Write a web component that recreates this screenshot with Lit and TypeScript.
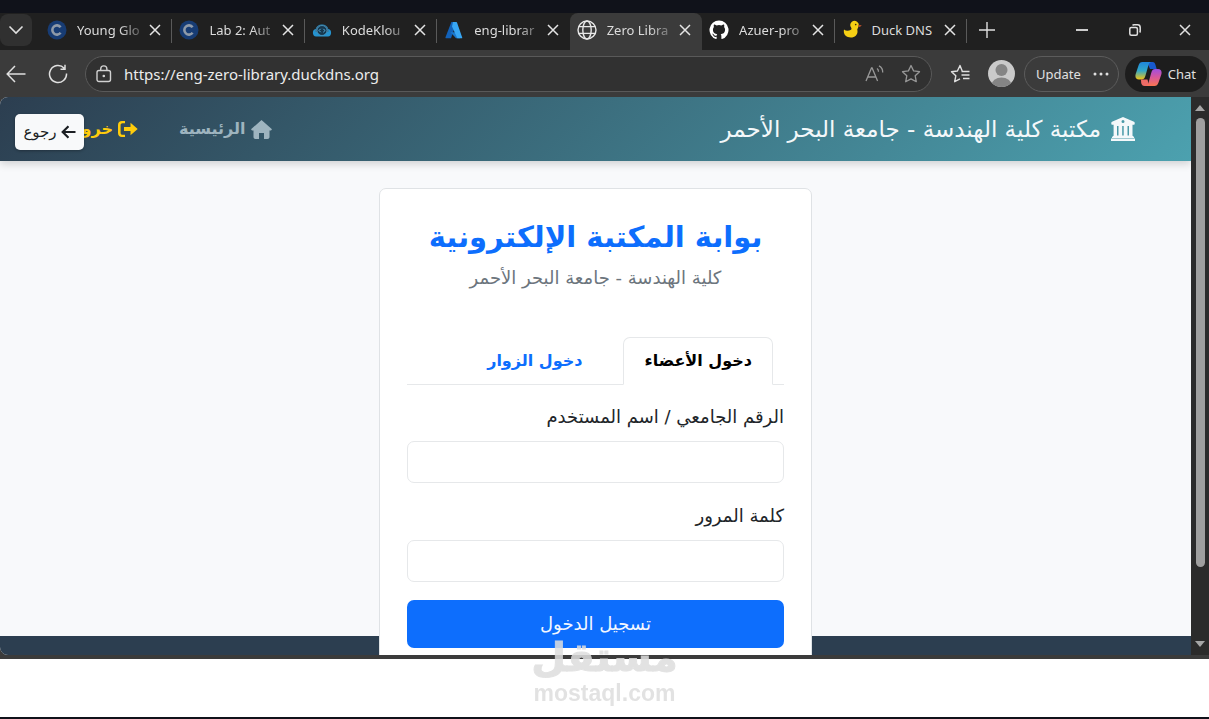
import { LitElement, html, css, svg } from "lit";
import { customElement, property, state } from "lit/decorators.js";
import { classMap } from "lit/directives/class-map.js";

const closeIcon = html`<svg viewBox="0 0 12 12" width="12" height="12" fill="none" stroke="currentColor" stroke-width="1.5" aria-hidden="true"><path d="M1 1l10 10M11 1L1 11" /></svg>`;

const courseIcon = svg`<circle cx="10" cy="10" r="9.5" fill="#173c74" /><path d="M13.6 7.2A4.6 4.6 0 1 0 13.6 12.8" fill="none" stroke="#8f9aa8" stroke-width="2.6" />`;
const cloudIcon = svg`<path d="M4 16.5a3.8 3.8 0 0 1-.3-7.4 6.6 6.6 0 0 1 12.6 0A3.8 3.8 0 0 1 16 16.5z" fill="#2593cf" /><path d="M3.6 10a6.6 6.6 0 0 1 12.8 0v2H3.6z" fill="#3c6c8a" /><circle cx="10" cy="10.5" r="5" fill="#16384f" stroke="#4d9cc6" stroke-width=".8" /><path d="M8.700 8.800L7 10.500l1.700 1.700M11.300 8.800l1.700 1.700-1.700 1.700" fill="none" stroke="#58b2e2" />`;
const azureIcon = svg`<path d="M7.400 2h5.200L7 18.300H2.300c-.7 0-1-.5-.8-1.100z" fill="#1261b8" /><path d="M6.500 12.200h7.700l2 6-4.200.1z" fill="#1a78cf" /><path d="M9 2h3.200c.4 0 .7.200.8.600l5.200 14.800c.2.500-.1.900-.6.900h-4.300L8 6.500z" fill="#37a6f4" />`;
const globeIcon = svg`<g fill="none" stroke="#e8e8e8" stroke-width="1.4"><circle cx="10" cy="10" r="9" /><ellipse cx="10" cy="10" rx="4.2" ry="9" /><path d="M1.800 6.600h16.400M1.800 13.400h16.400" /></g>`;
const githubIcon = svg`<path d="M10 .5a9.500 9.500 0 0 0-3 18.520c.48.09.65-.2.65-.46v-1.800c-2.640.57-3.200-1.120-3.200-1.120-.43-1.100-1.050-1.390-1.050-1.390-.87-.59.060-.58.060-.58.950.07 1.450.98 1.450.98.850 1.450 2.220 1.030 2.760.79.090-.61.330-1.030.600-1.270-2.110-.24-4.330-1.050-4.330-4.690 0-1.040.37-1.890.98-2.550-.1-.24-.42-1.210.09-2.510 0 0 .8-.26 2.610.97a9.100 9.100 0 0 1 4.760 0c1.810-1.230 2.610-.97 2.610-.97.510 1.300.190 2.270.090 2.510.610.660.980 1.510.980 2.550 0 3.650-2.230 4.450-4.350 4.690.350.290.650.880.650 1.770v2.620c0 .260.170.560.660.460A9.500 9.500 0 0 0 10 .5z" fill="#fff" />`;
const duckIcon = svg`<path d="M2 9.500c2 1.500 4.500 1.600 7 .2.800-.5.500-1.400.1-2.200A4.200 4.200 0 1 1 16.300 7c-.3 1.400-1.300 2-.9 3.200.7 3.800-1.700 7.300-6.600 7.300C4 17.500 1 14.500 2 9.500z" fill="#f5cf14" /><path d="M16.400 4.500c1.200.4 2.200.7 3.200.5-.5 1.600-1.800 2.200-3.200 2z" fill="#a5492a" /><circle cx="13.700" cy="4.600" r=".8" fill="#3b2b0a" />`;

const tabs = [
  { title: "Young Glo", icon: courseIcon, fade: true, line: true },
  { title: "Lab 2: Aut", icon: courseIcon, fade: true, line: true },
  { title: "KodeKlou", icon: cloudIcon, fade: true, line: true },
  { title: "eng-librar", icon: azureIcon, fade: true },
  { title: "Zero Libra", icon: globeIcon, fade: true, active: true },
  { title: "Azuer-pro", icon: githubIcon, fade: true, line: true },
  { title: "Duck DNS", icon: duckIcon, line: true },
];

@customElement("browser-tab")
class BrowserTab extends LitElement {
  static styles = css`
    :host { display: block; flex: 1; min-width: 0; }
    .tab {
      display: flex; align-items: center; box-sizing: border-box;
      height: 37px; padding: 0 11px 3px 7px; position: relative; color: #dcdcdc;
    }
    .tab.active { background: #3b3b3b; border-radius: 8px 8px 0 0; }
    .tab.line::after {
      content: ""; position: absolute; right: 0; top: 6px; width: 1px; height: 24px; background: #5a5a5a;
    }
    .icon { flex: none; margin-right: 10px; }
    .title { flex: 1; min-width: 0; overflow: hidden; white-space: nowrap; font: 13px/20px "Noto Sans", sans-serif; }
    .fade { mask-image: linear-gradient(90deg, #000 64%, rgba(0, 0, 0, 0.2) 100%); }
    .close {
      flex: none; display: grid; place-items: center; width: 12px; height: 12px; margin-left: 6px;
      border: 0; padding: 0; background: none; color: #e4e4e4;
    }
  `;
  @property({ attribute: false }) data: any;
  render() {
    const t = this.data;
    return html`<div class=${classMap({ tab: true, active: !!t.active, line: !!t.line })}>
      <svg class="icon" viewBox="0 0 20 20" width="20" height="20" aria-hidden="true">${t.icon}</svg>
      <span class=${classMap({ title: true, fade: !!t.fade })}>${t.title}</span>
      <button class="close" aria-label="Close tab">${closeIcon}</button>
    </div>`;
  }
}

@customElement("browser-chrome")
class BrowserChrome extends LitElement {
  static styles = css`
    :host { display: block; font-family: "Noto Sans", sans-serif; }
    button { border: 0; padding: 0; background: none; color: #e0e0e0; font: inherit; display: grid; place-items: center; flex: none; }
    .strip { height: 13px; background: #10121a; }
    .tabbar { display: flex; align-items: center; height: 37px; background: #202020; }
    .menu { width: 32px; height: 32px; margin: 0 8px 3px 0; border-radius: 8px; background: #303030; }
    .tabs { display: flex; flex: 0 1 927px; min-width: 0; }
    .add { width: 40px; height: 30px; margin-bottom: 4px; }
    .window { display: flex; margin: 0 0 3px auto; }
    .window button { width: 53px; height: 32px; }
    .window button:last-child { width: 48px; }
    .toolbar { display: flex; align-items: center; height: 47px; background: #3b3b3b; box-sizing: border-box; padding: 0 2px 0 5px; }
    .tool { width: 22px; height: 22px; }
    .reload { margin: 0 16px 0 20px; }
    .address {
      flex: 1; min-width: 0; display: flex; align-items: center; height: 36px; box-sizing: border-box;
      border: 1px solid #595959; border-radius: 18px; background: #313131; padding: 0 10px;
    }
    .address .lock { margin-right: 12px; width: 16px; }
    .url { flex: 1; min-width: 0; border: 0; padding: 0; background: none; color: #ececec; outline: 0; font: 15px/20px "Noto Sans", sans-serif; }
    .dim { color: #989898; width: 20px; }
    .read { margin-right: 16px; }
    .fav { margin: 0 17px; }
    .update { display: flex; align-items: center; gap: 11px; height: 36px; box-sizing: border-box; padding: 0 8px 0 11px; border: 1px solid #5c5c5c; border-radius: 18px; font-size: 13px; line-height: 20px; margin: 0 6px 0 9px; }
    .chat { display: flex; align-items: center; gap: 6px; height: 36px; padding: 0 11px 0 10px; border-radius: 18px; background: #1d1d1d; font-size: 13px; line-height: 20px; }
  `;
  render() {
    return html`
      <div class="strip"></div>
      <div class="tabbar">
        <button class="menu" aria-label="Tab actions"><svg width="16" height="10" viewBox="0 0 16 10" fill="none" stroke="currentColor" stroke-width="1.6"><path d="M1.500 1.500L8 8l6.500-6.500" /></svg></button>
        <div class="tabs">${tabs.map((t) => html`<browser-tab .data=${t}></browser-tab>`)}</div>
        <button class="add" aria-label="New tab"><svg width="16" height="16" viewBox="0 0 16 16" stroke="currentColor" stroke-width="1.4"><path d="M8 0v16M0 8h16" /></svg></button>
        <div class="window">
          <button aria-label="Minimize"><svg width="12" height="12" stroke="currentColor" stroke-width="1.8"><path d="M0 6h12" /></svg></button>
          <button aria-label="Restore"><svg width="12" height="12" viewBox="0 0 12 12" fill="none" stroke="currentColor" stroke-width="1.5"><rect x=".8" y="3.6" width="7.6" height="7.6" rx="1.5" /><path d="M3.500 1.300C4 .9 4.500.8 5 .8h3.500a2.700 2.700 0 0 1 2.700 2.700V7c0 .6-.2 1-.5 1.500" /></svg></button>
          <button aria-label="Close window">${closeIcon}</button>
        </div>
      </div>
      <div class="toolbar">
        <button class="tool" aria-label="Back"><svg width="20" height="18" viewBox="0 0 20 18" fill="none" stroke="currentColor" stroke-width="1.5"><path d="M19.500 9H1.500M9 1L1.200 9 9 17" /></svg></button>
        <button class="tool reload" aria-label="Reload"><svg width="20" height="20" viewBox="0 0 20 20" fill="none" stroke="currentColor" stroke-width="1.5"><path d="M18.500 9.500a8.500 8.500 0 1 1-2.300-5.300M17 .8v4.400h-4.500" /></svg></button>
        <div class="address">
          <button class="lock" aria-label="Site information"><svg width="16" height="18" viewBox="0 0 16 18" fill="none" stroke="#d0d0d0" stroke-width="1.4"><rect x="1" y="5.5" width="13.5" height="11" rx="2" /><path d="M4.700 5.500V4a3.100 3.100 0 0 1 6.200 0v1.500" /><circle cx="7.8" cy="11" r=".6" fill="#d0d0d0" /></svg></button>
          <input class="url" type="text" aria-label="Address" value="https://eng-zero-library.duckdns.org" />
          <button class="dim read" aria-label="Read aloud"><svg width="20" height="18" viewBox="0 0 20 18" fill="none" stroke="currentColor" stroke-width="1.3"><path d="M1 16L6.500 3h.6l5.500 13M3 12h7.600M12 3.500c1 .7 1.500 1.800 1.500 3.200M14 .8c2.500 1.300 3.900 3.700 3.700 6.700" /></svg></button>
          <button class="dim" aria-label="Add to favorites"><svg width="20" height="20" viewBox="0 0 20 20" fill="none" stroke="currentColor" stroke-width="1.3" stroke-linejoin="round"><path d="M10 1.500l2.600 5.400 5.900.8-4.300 4.100 1.100 5.900L10 14.900l-5.300 2.800 1.100-5.900L1.500 7.700l5.900-.8z" /></svg></button>
        </div>
        <button class="tool fav" aria-label="Favorites"><svg width="20" height="20" viewBox="0 0 20 20" fill="none" stroke="currentColor" stroke-width="1.4" stroke-linejoin="round"><path d="M12.200 7L10 1.500 7.400 7l-5.900.7 4.300 4.100-1.100 5.900 5.300-2.800M11.500 7.500h8M11.500 11h8M13 14.500h6.500" /></svg></button>
        <button aria-label="Profile"><svg width="27" height="27" viewBox="0 0 27 27"><defs><clipPath id="face"><circle cx="13.5" cy="13.5" r="13.5" /></clipPath></defs><g clip-path="url(#face)"><path fill="#cacaca" d="M0 0h27v27H0z" /><circle cx="13.5" cy="10" r="6" fill="#858585" /><ellipse cx="13.5" cy="25" rx="10" ry="7.5" fill="#858585" /></g></svg></button>
        <button class="update">Update<svg width="18" height="4" fill="currentColor" aria-hidden="true"><circle cx="3" cy="2" r="1.5" /><circle cx="9" cy="2" r="1.5" /><circle cx="15" cy="2" r="1.5" /></svg></button>
        <button class="chat"><svg width="27" height="26" viewBox="0 0 27 26" aria-hidden="true"><defs>
          <linearGradient id="ca" x2="0" y2="1"><stop stop-color="#1e86dd" /><stop offset=".5" stop-color="#33a9c6" /><stop offset="1" stop-color="#f2c413" /></linearGradient>
          <linearGradient id="cb" x2="0" y2="1"><stop stop-color="#9f4fe0" /><stop offset=".45" stop-color="#d556a0" /><stop offset="1" stop-color="#fa7550" /></linearGradient></defs>
          <path d="M12 1h5.500c1.800 0 2.500 1.200 3 3l1.200 4H15z" fill="#1759cf" /><path d="M7.500 1H16c-1.700.8-2.300 2-2.800 4l-2.700 9.500c-.7 2.700-1.700 4-4 4H4c-3 0-4.200-2-3.300-5.500L3.500 4.500C4.200 2 5.500 1 7.500 1z" fill="url(#ca)" /><path d="M6 18.500h6.500L14 25H9.500c-2 0-2.700-1-3.300-3z" fill="#ed6b66" /><path d="M19.500 25H11c1.600-.9 2.200-2 2.700-4l2.500-9c.7-2.700 1.700-4 4-4H23c3 0 4.200 2 3.300 5.500l-2.800 8c-.8 2.500-2 3.500-4 3.500z" fill="url(#cb)" /></svg>Chat</button>
      </div>`;
  }
}

@customElement("library-page")
class LibraryPage extends LitElement {
  static styles = css`
    :host { display: flex; flex: 1; min-width: 0; min-height: 0; direction: rtl; font-family: "DejaVu Sans", sans-serif; }
    .page { flex: 1; min-width: 0; display: flex; flex-direction: column; overflow: hidden; background: #f8f9fb; position: relative; border-radius: 8px 0 0 8px; }
    .header {
      flex: none; display: flex; align-items: center; justify-content: space-between; height: 64px; box-sizing: border-box;
      padding: 0 56px 0 60px; background: linear-gradient(135deg, #2c3e50, #4ca1af); box-shadow: 0 3px 8px rgba(0, 0, 0, 0.16); z-index: 1;
    }
    a { text-decoration: none; display: flex; align-items: center; white-space: nowrap; }
    .brand { gap: 10px; color: #f4f8fa; font-size: 23px; line-height: 32px; }
    .nav { display: flex; gap: 41px; font-size: 16px; font-weight: 700; line-height: 28px; }
    .nav a { gap: 5px; }
    .home { color: #9eb4bf; }
    .exit { color: #ffcc0c; width: 78px; }
    .back {
      position: absolute; left: 15px; top: 17px; z-index: 2; width: 69px; height: 36px; border: 0; border-radius: 5px; padding: 0;
      display: flex; align-items: center; justify-content: center; gap: 4px; background: #f8f9fa; color: #1c1f23;
      font: 15px/24px "DejaVu Sans", sans-serif; box-shadow: 0 1px 3px rgba(0, 0, 0, 0.3);
    }
    .main { flex: 1; min-height: 0; padding: 27px 16px 0; display: flex; align-items: flex-start; justify-content: center; }
    .card { width: 433px; max-width: 100%; box-sizing: border-box; padding: 27px 27px 48px; border: 1px solid #dfe2e5; border-radius: 7px; background: #fff; position: relative; z-index: 1; }
    .title { margin: 0; text-align: center; color: #0d6efd; font-size: 29px; line-height: 42px; font-weight: 700; }
    .sub { margin: 6px 0 45px; text-align: center; color: #6c757d; font-size: 18px; line-height: 28px; }
    .tablist { display: flex; gap: 20px; padding-right: 11px; border-bottom: 1px solid #e6e8ea; }
    .pick { margin-bottom: -1px; height: 48px; padding: 0 20px; border: 1px solid transparent; border-radius: 7px 7px 0 0; background: none; color: #0d6efd; font: 700 16px/28px "DejaVu Sans", sans-serif; white-space: nowrap; }
    .pick.on { background: #fff; color: #000; border-color: #e6e8ea #e6e8ea #fff; }
    .form { padding-top: 17px; }
    .label { display: block; color: #212529; font-size: 18px; line-height: 30px; margin-bottom: 9px; }
    .field { display: block; width: 100%; height: 42px; box-sizing: border-box; border: 1px solid #e6e8ea; border-radius: 7px; background: #fff; margin-bottom: 18px; padding: 0 12px; outline: 0; font: 18px/28px "DejaVu Sans", sans-serif; }
    .submit { width: 100%; height: 48px; border: 0; border-radius: 7px; background: #0d6efd; color: #f2f7ff; font: 18px/28px "DejaVu Sans", sans-serif; }
    .footer { flex: none; height: 19px; box-sizing: border-box; background: #2c3e50; }
    .scroll { flex: none; width: 18px; display: flex; flex-direction: column; align-items: center; background: #2b2b2b; padding: 8px 0; box-sizing: border-box; gap: 7px; color: #a6a6a6; }
    .scroll svg { flex: none; }
    .track { flex: 1; width: 9px; }
    .thumb { height: 87%; border-radius: 5px; background: #9f9f9f; }
  `;
  @state() private mode = "member";
  render() {
    const member = this.mode === "member";
    return html`
      <div class="scroll">
        <svg width="10" height="6" fill="currentColor"><path d="M5 0l5 6H0z" /></svg>
        <div class="track"><div class="thumb"></div></div>
        <svg width="10" height="6" fill="currentColor"><path d="M5 6l5-6H0z" /></svg>
      </div>
      <div class="page">
        <header class="header">
          <a class="brand" href="#"><svg width="24" height="24" viewBox="0 0 24 24" fill="currentColor" aria-hidden="true"><path fill-rule="evenodd" d="M12 0l11 4.800c.5.200.7.600.7 1V7c0 .5-.3.800-.8.800h-1.400V18.800l1.600 1.200v1H1v-1l1.600-1.200V7.800H1.100c-.5 0-.8-.3-.8-.8V5.800c0-.4.200-.8.700-1zM12 3a1.500 1.500 0 1 0 0 3 1.500 1.500 0 0 0 0-3zM6 9v9.500h1.500V9zM11.200 9v9.500h1.500V9zM16.500 9v9.500H18V9zM0 21.500h24V24H0z" /></svg>مكتبة كلية الهندسة - جامعة البحر الأحمر</a>
          <nav class="nav">
            <a class="home" href="#"><svg width="21" height="19" viewBox="0 0 21 19" fill="currentColor" aria-hidden="true"><path d="M10.500 0L21 9.300l-1 1.200h-1.500V17c0 1.200-.8 2-2 2H13v-6H8v6H4.500c-1.200 0-2-.8-2-2v-6.500H1L0 9.300z" /></svg>الرئيسية</a>
            <a class="exit" href="#"><svg width="20" height="16" viewBox="0 0 20 16" fill="currentColor" aria-hidden="true"><path d="M7 0v2.300H4.500c-1.100 0-1.900.7-1.900 1.800v7.800c0 1.100.8 1.800 1.900 1.800H7V16H4c-2.400 0-4-1.600-4-4V4c0-2.400 1.600-4 4-4zM12.500 1.800L19.700 8l-7.200 6.200V10H6V6h6.500z" /></svg>خروج</a>
          </nav>
        </header>
        <button class="back"><svg width="15" height="14" viewBox="0 0 15 14" fill="none" stroke="currentColor" stroke-width="2.2" aria-hidden="true"><path d="M14.500 7H2M7.500 1.200L1.700 7l5.800 5.800" /></svg>رجوع</button>
        <main class="main">
          <section class="card">
            <h1 class="title">بوابة المكتبة الإلكترونية</h1>
            <p class="sub">كلية الهندسة - جامعة البحر الأحمر</p>
            <div class="tablist" role="tablist">
              <button role="tab" aria-selected=${member} class=${classMap({ pick: true, on: member })} @click=${() => (this.mode = "member")}>دخول الأعضاء</button>
              <button role="tab" aria-selected=${!member} class=${classMap({ pick: true, on: !member })} @click=${() => (this.mode = "guest")}>دخول الزوار</button>
            </div>
            <form class="form" @submit=${(e: Event) => e.preventDefault()}>
              <label class="label" for="user">الرقم الجامعي / اسم المستخدم</label>
              <input class="field" id="user" type="text" />
              <label class="label" for="pass">كلمة المرور</label>
              <input class="field" id="pass" type="password" />
              <button class="submit" type="submit">تسجيل الدخول</button>
            </form>
          </section>
        </main>
        <footer class="footer"></footer>
      </div>`;
  }
}

@customElement("app-root")
class AppRoot extends LitElement {
  static styles = css`
    :host { display: flex; flex-direction: column; height: 100vh; background: #fff; position: relative; overflow: hidden; }
    .window { flex: 1; min-height: 0; display: flex; flex-direction: column; background: #3b3b3b; border-bottom: 4px solid #3b3b3b; }
    .below { height: 58px; flex: none; border-bottom: 2px solid #10121a; }
    .mark {
      position: absolute; left: 50%; bottom: 13px; z-index: 3; transform: translateX(-50%); display: flex; flex-direction: column; align-items: center;
      color: #dedede; opacity: 0.86; pointer-events: none;
    }
    .mark-ar { font: 700 40px/46px "DejaVu Sans", sans-serif; -webkit-text-stroke: 1px #dedede; }
    .mark-en { font: 700 23px/26px "Liberation Sans", sans-serif; }
  `;
  render() {
    return html`
      <div class="window"><browser-chrome></browser-chrome><library-page></library-page></div>
      <div class="below"></div>
      <div class="mark"><span class="mark-ar" lang="ar">مستقل</span><span class="mark-en">mostaql.com</span></div>`;
  }
}
